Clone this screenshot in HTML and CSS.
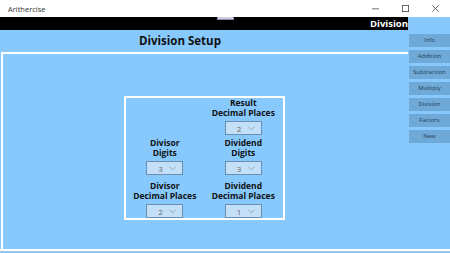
FILE: index.html
```html
<!DOCTYPE html>
<html>
<head>
  <meta charset="UTF-8">
  <title>Arithercise</title>
  <meta name="viewport" content="width=device-width, initial-scale=1.0">
  <link rel="stylesheet" href="styles.css">
</head>
<body>
  <div class="titlebar">
    <span class="app-name">Arithercise</span>
    <div class="controls">
      <span class="ctl">
        <svg width="10" height="10" viewBox="0 0 10 10"><path d="M0 5.5h10" stroke="#333" stroke-width="1"/></svg>
      </span>
      <span class="ctl">
        <svg width="10" height="10" viewBox="0 0 10 10"><rect x="0.5" y="0.5" width="9" height="9" fill="none" stroke="#333" stroke-width="1"/></svg>
      </span>
      <span class="ctl">
        <svg width="10" height="10" viewBox="0 0 10 10"><path d="M0.5 0.5l9 9M9.5 0.5l-9 9" stroke="#333" stroke-width="1"/></svg>
      </span>
    </div>
  </div>

  <div class="app">
    <div class="main">
      <div class="topbar">
        <span class="handle"></span>
        <span class="mode">Division</span>
      </div>
      <h1 class="heading">Division Setup</h1>

      <div class="panel">
        <div class="setup">
          <div class="field"></div>
          <div class="field">
            <label>Result<br>Decimal Places</label>
            <div class="combo"><span>2</span><svg class="chev" viewBox="0 0 8 5"><path d="M0.5 0.5l3.5 3.5l3.5-3.5" fill="none" stroke="#7d93a8" stroke-width="0.9"/></svg></div>
          </div>
          <div class="field">
            <label>Divisor<br>Digits</label>
            <div class="combo"><span>3</span><svg class="chev" viewBox="0 0 8 5"><path d="M0.5 0.5l3.5 3.5l3.5-3.5" fill="none" stroke="#7d93a8" stroke-width="0.9"/></svg></div>
          </div>
          <div class="field">
            <label>Dividend<br>Digits</label>
            <div class="combo"><span>3</span><svg class="chev" viewBox="0 0 8 5"><path d="M0.5 0.5l3.5 3.5l3.5-3.5" fill="none" stroke="#7d93a8" stroke-width="0.9"/></svg></div>
          </div>
          <div class="field">
            <label>Divisor<br>Decimal Places</label>
            <div class="combo"><span>2</span><svg class="chev" viewBox="0 0 8 5"><path d="M0.5 0.5l3.5 3.5l3.5-3.5" fill="none" stroke="#7d93a8" stroke-width="0.9"/></svg></div>
          </div>
          <div class="field">
            <label>Dividend<br>Decimal Places</label>
            <div class="combo"><span>1</span><svg class="chev" viewBox="0 0 8 5"><path d="M0.5 0.5l3.5 3.5l3.5-3.5" fill="none" stroke="#7d93a8" stroke-width="0.9"/></svg></div>
          </div>
        </div>
      </div>
    </div>

    <div class="sidebar">
      <button class="nav">Info</button>
      <button class="nav">Addition</button>
      <button class="nav">Subtraction</button>
      <button class="nav">Multiply</button>
      <button class="nav">Division</button>
      <button class="nav">Factors</button>
      <button class="nav">New</button>
    </div>
  </div>
  <div class="bottom"></div>
</body>
</html>
```

FILE: styles.css
```css
html, body {
  margin: 0;
  padding: 0;
}

body {
  width: 450px;
  height: 253px;
  overflow: hidden;
  background-color: #87c9fd;
  font-family: "Open Sans", "Noto Sans", sans-serif;
}

.titlebar {
  height: 17px;
  background-color: #ffffff;
  display: flex;
  align-items: center;
  justify-content: space-between;
}

.app-name {
  font-size: 7.5px;
  color: #333;
  padding-left: 8px;
}

.controls {
  display: flex;
  height: 17px;
}

.ctl {
  width: 30px;
  display: flex;
  align-items: center;
  justify-content: center;
}

.ctl svg {
  width: 7px;
  height: 7px;
}

.app {
  display: flex;
  height: 232px;
}

.main {
  width: 408px;
  display: flex;
  flex-direction: column;
}

.topbar {
  position: relative;
  height: 13px;
  background-color: #000;
  display: flex;
  align-items: center;
  justify-content: flex-end;
}

.handle {
  position: absolute;
  left: 217px;
  top: 0;
  width: 15px;
  height: 2px;
  background-color: #d0d0e4;
  border: 1px solid #8a8aaa;
  border-top: 0;
}

.mode {
  color: #fff;
  font-weight: bold;
  font-size: 9.5px;
  line-height: 13px;
}

.heading {
  margin: 0;
  height: 22px;
  line-height: 22px;
  font-size: 11.5px;
  font-weight: bold;
  color: #111;
  padding-left: 139px;
  text-align: left;
}

.panel {
  flex: 1;
  margin-left: 1px;
  border: 2px solid #fff;
  border-right: 0;
  border-bottom: 0;
  display: flex;
  justify-content: center;
  align-items: flex-start;
  padding-top: 42px;
}

.setup {
  width: 157px;
  height: 120px;
  border: 2px solid #fff;
  display: grid;
  grid-template-columns: 1fr 1fr;
  grid-template-rows: 40px 43px 1fr;
  margin-left: -3px;
}

.field {
  display: flex;
  flex-direction: column;
  align-items: center;
  justify-content: flex-start;
}

.field label {
  font-size: 8.5px;
  font-weight: bold;
  line-height: 10px;
  color: #111;
  text-align: center;
  margin-bottom: 3px;
}

.combo {
  width: 18px;
  height: 12px;
  border: 1px solid #6b8fb0;
  background-color: #c4e0f8;
  display: flex;
  align-items: center;
  justify-content: space-between;
  padding: 0 6px 0 11px;
  font-size: 8px;
  color: #666;
}

.chev {
  width: 7px;
  height: 5px;
}

.sidebar {
  width: 41px;
  margin-left: 1px;
  padding-top: 17px;
  display: flex;
  flex-direction: column;
  gap: 3px;
}

.nav {
  height: 13px;
  padding: 0;
  border: 0;
  background-color: #6ea9d8;
  color: #2a3b4c;
  font-family: "Open Sans", "Noto Sans", sans-serif;
  font-size: 6px;
  line-height: 13px;
}

.bottom {
  height: 4px;
  border-top: 2px solid #fff;
  background-color: #9cc4e4;
}
```
